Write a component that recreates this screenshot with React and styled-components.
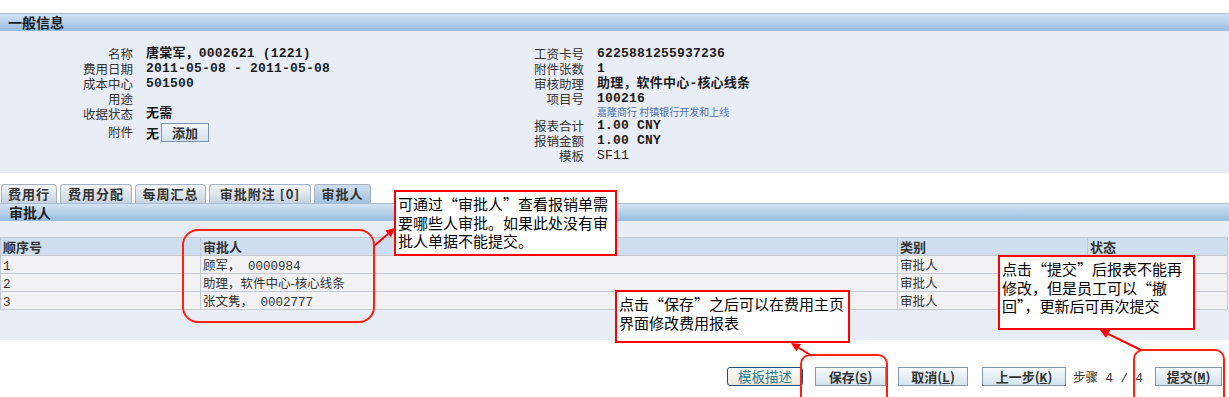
import React from 'react';
import styled, { createGlobalStyle } from 'styled-components';

const GlobalStyle = createGlobalStyle`
  body {
    margin: 0;
    background: #fff;
    font-family: "Noto Sans CJK SC", "Liberation Sans", sans-serif;
    color: #222;
  }
`;

const MONO = `"Liberation Mono", "Noto Sans CJK SC", monospace`;

const Page = styled.div`
  position: relative;
  width: 1229px;
  height: 397px;
  overflow: hidden;
  padding-top: 13px;
  box-sizing: border-box;
`;

const SectionBar = styled.div`
  height: 18px;
  box-sizing: border-box;
  border-top: 1px solid #a7bcd4;
  background: linear-gradient(#d3e3f3, #97bce0);
  padding-left: ${(p) => p.indent || 8}px;
  font-size: 14px;
  font-weight: bold;
  line-height: 17px;
  color: #1c1c1c;
`;

const InfoPanel = styled.div`
  height: 142px;
  background: #e9eef6;
  display: flex;
  padding-top: 15px;
  box-sizing: border-box;
`;

const InfoColumn = styled.div`
  width: ${(p) => p.width}px;
  display: grid;
  grid-template-columns: ${(p) => p.labelWidth}px 1fr;
  column-gap: 13px;
  align-content: start;
`;

const Label = styled.div`
  text-align: right;
  font-size: 12.5px;
  line-height: ${(p) => p.h || 15}px;
  height: ${(p) => p.h || 15}px;
  color: #333;
  white-space: nowrap;
`;

const Value = styled.div`
  font-family: ${MONO};
  font-size: 13px;
  font-weight: ${(p) => (p.plain ? 'normal' : 'bold')};
  line-height: ${(p) => p.h || 15}px;
  height: ${(p) => p.h || 15}px;
  color: #1a1a1a;
  white-space: nowrap;
  letter-spacing: 0.2px;
`;

const LinkText = styled.div`
  font-size: 10px;
  line-height: 12px;
  height: 12px;
  color: #4d6fa8;
  white-space: nowrap;
`;

const AttachCell = styled.div`
  display: flex;
  align-items: flex-end;
  gap: 2px;
  font-weight: bold;
  font-size: 13px;
  color: #1a1a1a;
  height: 22px;
  margin-top: -1px;
`;

const SmallButton = styled.div`
  width: 48px;
  height: 19px;
  box-sizing: border-box;
  border: 1px solid #7d94ab;
  background: linear-gradient(#f4f8fb, #d3e2ec);
  font-size: 13px;
  font-weight: bold;
  color: #333;
  text-align: center;
  line-height: 17px;
`;

const Gap = styled.div`
  height: ${(p) => p.h}px;
`;

const TabRow = styled.div`
  display: flex;
  gap: 3px;
  padding-left: 1px;
  height: 20px;
  align-items: flex-end;
`;

const Tab = styled.div`
  width: ${(p) => p.w}px;
  height: 19px;
  box-sizing: border-box;
  border: 1px solid #a3b2c2;
  border-bottom: none;
  border-radius: 4px 4px 0 0;
  background: ${(p) =>
    p.active ? 'linear-gradient(#cfdff0, #a3c1df)' : 'linear-gradient(#f2f5f8, #c8d3df)'};
  font-size: 13px;
  font-weight: bold;
  color: #333;
  text-align: center;
  line-height: 18px;
  letter-spacing: 1px;
  white-space: nowrap;
`;

const TablePanel = styled.div`
  background: #e9eef6;
  padding: 16px 0 30px;
`;

const Grid = styled.div`
  display: grid;
  grid-template-columns: 200px 697px 190px 140px;
  border-left: 1px solid #c4c8d0;
  border-top: 1px solid #c4c8d0;
  width: 1228px;
  box-sizing: border-box;
`;

const Cell = styled.div`
  height: 18px;
  box-sizing: border-box;
  border-right: 1px solid #c4c8d0;
  border-bottom: 1px solid #c4c8d0;
  background: ${(p) => (p.head ? '#cfdfef' : '#f2f2f5')};
  font-size: ${(p) => (p.head ? 13 : 12.5)}px;
  font-weight: ${(p) => (p.head ? 'bold' : 'normal')};
  line-height: 17px;
  padding-left: 2px;
  color: #333;
  white-space: nowrap;
  overflow: hidden;
`;

const Digits = styled.span`
  font-family: ${MONO};
`;

const ButtonRow = styled.div`
  display: flex;
  justify-content: flex-end;
  align-items: center;
  padding: 27px 7px 0 0;
  height: 19px;
`;

const ActionButton = styled.div`
  width: ${(p) => p.w}px;
  height: 19px;
  box-sizing: border-box;
  margin-left: ${(p) => p.ml || 0}px;
  border: 1px solid ${(p) => (p.primary ? '#1f4e79' : '#8198ae')};
  border-radius: ${(p) => (p.primary ? 3 : 0)}px;
  background: ${(p) =>
    p.primary ? 'linear-gradient(#fffffb, #ebe8da)' : 'linear-gradient(#f6fafc, #d3e3ed)'};
  font-size: ${(p) => (p.primary ? 13.5 : 13)}px;
  font-weight: ${(p) => (p.primary ? 'normal' : 'bold')};
  color: ${(p) => (p.primary ? '#2a7a8e' : '#333')};
  text-align: center;
  line-height: 17px;
  white-space: nowrap;
  u {
    font-family: ${MONO};
  }
`;

const StepText = styled.div`
  margin-left: 7px;
  width: 82px;
  font-size: 12.5px;
  color: #333;
  white-space: nowrap;
`;

const Callout = styled.div`
  position: absolute;
  left: ${(p) => p.x}px;
  top: ${(p) => p.y}px;
  width: ${(p) => p.w}px;
  height: ${(p) => p.h}px;
  box-sizing: border-box;
  border: 2.5px solid #f00;
  background: #fff;
  padding: 3px 0 0 2px;
  font-size: 15px;
  line-height: 18.5px;
  color: #000;
  white-space: nowrap;
`;

const Ring = styled.div`
  position: absolute;
  left: ${(p) => p.x}px;
  top: ${(p) => p.y}px;
  width: ${(p) => p.w}px;
  height: ${(p) => p.h}px;
  box-sizing: border-box;
  border: 2px solid #f21;
  border-radius: ${(p) => p.r}px;
  pointer-events: none;
`;

const Overlay = styled.svg`
  position: absolute;
  left: 0;
  top: 0;
  pointer-events: none;
`;

const Arrow = ({ x1, y1, x2, y2 }) => {
  const a = Math.atan2(y2 - y1, x2 - x1);
  const len = 9;
  const wing = 4.5;
  const bx = x2 - len * Math.cos(a);
  const by = y2 - len * Math.sin(a);
  const px = -Math.sin(a) * wing;
  const py = Math.cos(a) * wing;
  const pts = `${x2},${y2} ${bx + px},${by + py} ${bx - px},${by - py}`;
  return (
    <g>
      <line x1={x1} y1={y1} x2={bx} y2={by} stroke="#f00" strokeWidth="2" />
      <polygon points={pts} fill="#f00" />
    </g>
  );
};

const leftInfo = [
  ['名称', '唐棠军，0002621 (1221)'],
  ['费用日期', '2011-05-08 - 2011-05-08'],
  ['成本中心', '501500'],
  ['用途', ''],
  ['收据状态', '无需'],
];

const rows = [
  ['1', '顾军，', ' 0000984'],
  ['2', '助理，软件中心-核心线条', ''],
  ['3', '张文隽，', ' 0002777'],
];

export default function App() {
  return (
    <Page>
      <GlobalStyle />
      <SectionBar>一般信息</SectionBar>
      <InfoPanel>
        <InfoColumn width={450} labelWidth={133}>
          {leftInfo.map(([l, v]) => (
            <React.Fragment key={l}>
              <Label>{l}</Label>
              <Value>{v}</Value>
            </React.Fragment>
          ))}
          <Label h={22}>附件</Label>
          <AttachCell>
            <span>无</span>
            <SmallButton>添加</SmallButton>
          </AttachCell>
        </InfoColumn>
        <InfoColumn width={600} labelWidth={134}>
          <Label>工资卡号</Label>
          <Value>6225881255937236</Value>
          <Label>附件张数</Label>
          <Value>1</Value>
          <Label>审核助理</Label>
          <Value>助理，软件中心-核心线条</Value>
          <Label>项目号</Label>
          <Value>100216</Value>
          <Label h={12} />
          <LinkText>嘉隆商行 村镇银行开发和上线</LinkText>
          <Label>报表合计</Label>
          <Value>1.00 CNY</Value>
          <Label>报销金额</Label>
          <Value>1.00 CNY</Value>
          <Label>模板</Label>
          <Value plain>SF11</Value>
        </InfoColumn>
      </InfoPanel>
      <Gap h={10} />
      <TabRow>
        <Tab w={56}>费用行</Tab>
        <Tab w={72}>费用分配</Tab>
        <Tab w={71}>每周汇总</Tab>
        <Tab w={102}>审批附注 [0]</Tab>
        <Tab w={57} active>审批人</Tab>
      </TabRow>
      <SectionBar indent={9}>审批人</SectionBar>
      <TablePanel>
        <Grid>
          <Cell head>顺序号</Cell>
          <Cell head>审批人</Cell>
          <Cell head>类别</Cell>
          <Cell head>状态</Cell>
          {rows.map(([n, name, code]) => (
            <React.Fragment key={n}>
              <Cell><Digits>{n}</Digits></Cell>
              <Cell>
                {name}
                <Digits>{code}</Digits>
              </Cell>
              <Cell>审批人</Cell>
              <Cell />
            </React.Fragment>
          ))}
        </Grid>
      </TablePanel>
      <ButtonRow>
        <ActionButton primary w={76}>模板描述</ActionButton>
        <ActionButton w={71} ml={12}>保存(<u>S</u>)</ActionButton>
        <ActionButton w={70} ml={12}>取消(<u>L</u>)</ActionButton>
        <ActionButton w={84} ml={14}>上一步(<u>K</u>)</ActionButton>
        <StepText>
          步骤<Digits> 4 / 4</Digits>
        </StepText>
        <ActionButton w={67}>提交(<u>M</u>)</ActionButton>
      </ButtonRow>

      <Ring x={182} y={229} w={193} h={94} r={16} />
      <Ring x={800} y={354} w={88} h={60} r={10} />
      <Ring x={1133} y={349} w={92} h={60} r={10} />

      <Callout x={394} y={190} w={223} h={66}>
        可通过“审批人”查看报销单需<br />
        要哪些人审批。如果此处没有审<br />
        批人单据不能提交。
      </Callout>
      <Callout x={615} y={290} w={235} h={53}>
        点击“保存”之后可以在费用主页<br />
        界面修改费用报表
      </Callout>
      <Callout x={998} y={255} w={197} h={75}>
        点击“提交”后报表不能再<br />
        修改，但是员工可以“撤<br />
        回”，更新后可再次提交
      </Callout>

      <Overlay width="1229" height="397">
        <Arrow x1={374} y1={246} x2={395} y2={228} />
        <Arrow x1={812} y1={356} x2={791} y2={343} />
        <Arrow x1={1141} y1={350} x2={1100} y2={330} />
      </Overlay>
    </Page>
  );
}
